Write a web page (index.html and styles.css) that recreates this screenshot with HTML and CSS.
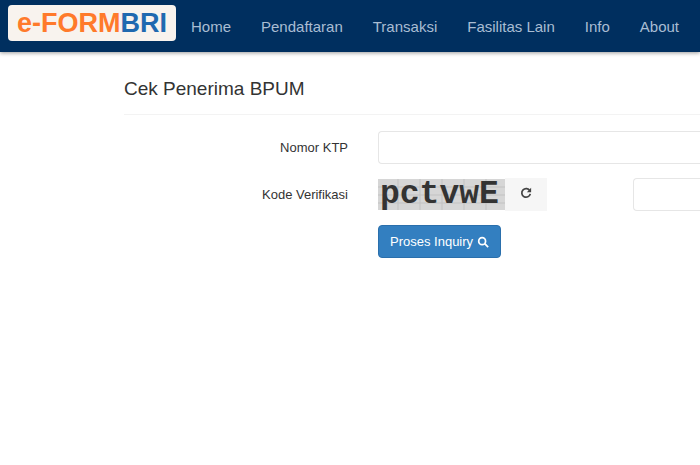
FILE: index.html
```html
<!DOCTYPE html>
<html lang="id">
<head>
  <meta charset="UTF-8" />
  <title>e-FORM BRI</title>
  <link rel="stylesheet" href="styles.css">
</head>
<body>

  <header class="navbar">
    <a class="brand" href="#"><span class="brand-form">e-FORM</span><span class="brand-bri">BRI</span></a>
    <nav class="menu">
      <a href="#">Home</a>
      <a href="#">Pendaftaran</a>
      <a href="#">Transaksi</a>
      <a href="#">Fasilitas Lain</a>
      <a href="#">Info</a>
      <a href="#">About</a>
    </nav>
  </header>

  <main class="content">
    <h1>Cek Penerima BPUM</h1>
    <form class="inquiry">
      <label for="ktp">Nomor KTP</label>
      <input type="text" id="ktp" name="ktp">

      <label for="kode">Kode Verifikasi</label>
      <div class="verify">
        <div class="captcha">
          <svg class="captcha-img" viewBox="0 0 127 31" role="img" aria-label="Captcha">
            <rect width="127" height="31" fill="#d6d6d6" />
            <path d="M0 8H127M0 16H127M0 24H127M20 0V31M42 0V31M64 0V31M86 0V31M108 0V31" stroke="#c2c2c2" />
            <text x="2" y="24">pctvwE</text>
          </svg>
          <button type="button" class="refresh" aria-label="Refresh">
            <svg viewBox="0 0 14 14" width="12" height="12">
              <path d="M11.5 4.5A5 5 0 1 0 12 8" fill="none" stroke="#444" stroke-width="2" />
              <path d="M13 1v5H8z" fill="#444" />
            </svg>
          </button>
        </div>
        <input type="text" id="kode" name="kode">
      </div>

      <button type="submit" class="submit">
        Proses Inquiry
        <svg viewBox="0 0 14 14" width="12" height="12">
          <circle cx="6" cy="6" r="4" fill="none" stroke="#fff" stroke-width="2" />
          <path d="M9 9l4 4" stroke="#fff" stroke-width="2" />
        </svg>
      </button>
    </form>
  </main>

</body>
</html>
```
FILE: styles.css
```css
* {
  box-sizing: border-box;
}
body {
  font-family: "Liberation Sans", Arial, sans-serif;
  font-size: 13px;
  color: #333;
  background: #fff;
  margin: 0;
  overflow-x: hidden;
}
.navbar {
  display: flex;
  align-items: flex-start;
  height: 52px;
  padding: 5px 8px;
  background: #002f5f;
  box-shadow: 0 1px 4px rgba(0, 0, 0, 0.4);
}
.brand {
  display: flex;
  align-items: center;
  justify-content: center;
  width: 168px;
  height: 36px;
  flex-shrink: 0;
  background: #f8f3ee;
  border-radius: 4px;
  font-size: 27px;
  font-weight: bold;
  text-decoration: none;
}
.brand-form {
  color: #ff7a2b;
}
.brand-bri {
  color: #1f69b0;
}
.menu {
  display: flex;
  gap: 30px;
  padding: 12px 0 0 15px;
  white-space: nowrap;
}
.menu a {
  color: #a9bdd3;
  font-size: 15px;
  line-height: 20px;
  text-decoration: none;
}
.content {
  padding: 26px 0 0 124px;
}
h1 {
  margin: 0 0 16px;
  padding-bottom: 14px;
  border-bottom: 1px solid #f3f3f3;
  font-size: 19px;
  line-height: 22px;
  font-weight: normal;
}
.inquiry {
  display: grid;
  grid-template-columns: 224px 1fr;
  column-gap: 30px;
  row-gap: 14px;
  align-items: center;
}
.inquiry label {
  text-align: right;
}
input {
  width: 100%;
  height: 33px;
  padding: 6px 12px;
  border: 1px solid #e6e6e6;
  border-right: 0;
  border-radius: 4px 0 0 4px;
  background: #fff;
  font: inherit;
}
.verify {
  display: grid;
  grid-template-columns: 240px 1fr;
  column-gap: 15px;
}
.captcha {
  display: flex;
  align-items: center;
}
.captcha-img {
  width: 127px;
  height: 31px;
  overflow: visible;
}
.captcha-img text {
  font: bold 33px "Liberation Mono", monospace;
  fill: #333;
}
.refresh {
  width: 42px;
  height: 33px;
  border: 0;
  background: #f6f6f6;
}
.submit {
  grid-column: 2;
  justify-self: start;
  display: flex;
  align-items: center;
  gap: 4px;
  height: 33px;
  padding: 0 11px;
  border: 1px solid #2a6fac;
  border-radius: 4px;
  background: #337fc0;
  color: #fff;
  font: inherit;
}
```
